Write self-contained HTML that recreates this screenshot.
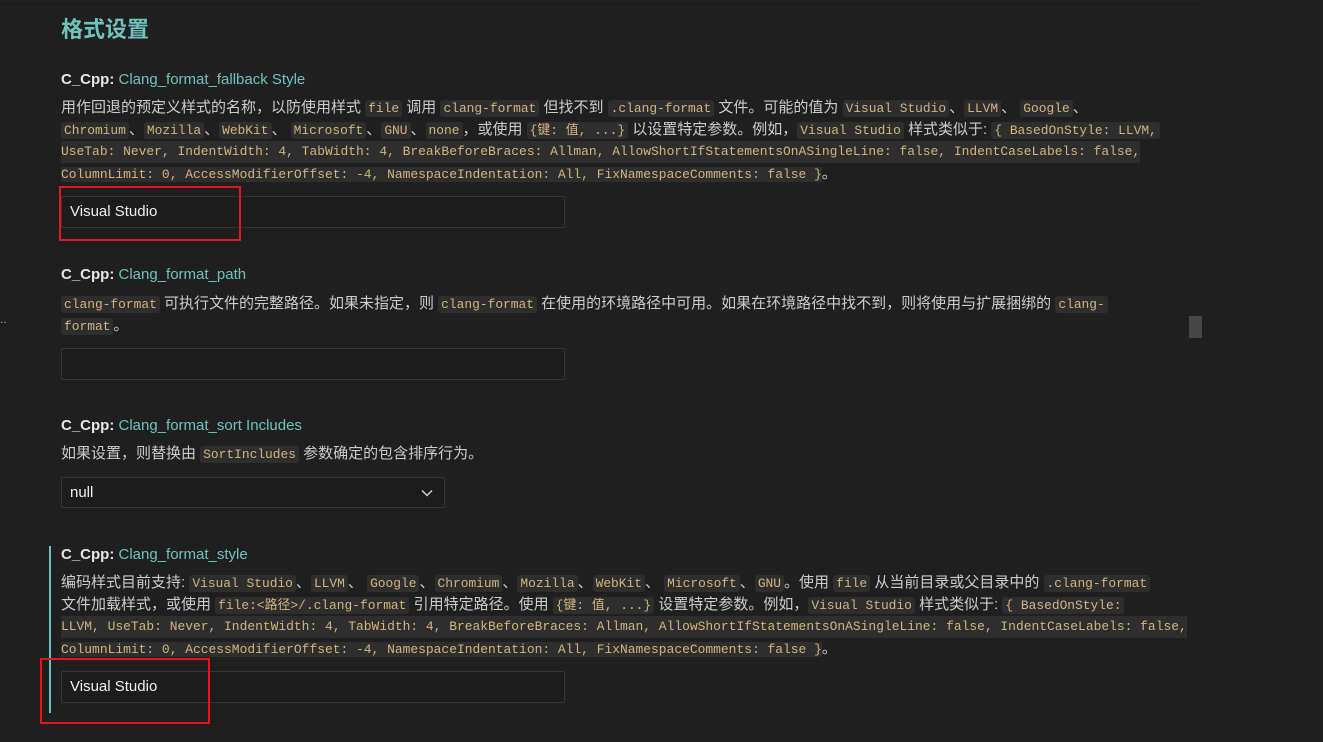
<!DOCTYPE html>
<html><head><meta charset="utf-8"><style>
html,body{margin:0;padding:0;width:1323px;height:742px;overflow:hidden;background:#1f1f1f;}
body{position:relative;font-family:"Liberation Sans","Noto Sans CJK SC",sans-serif;color:#cccccc;font-size:15px;}
.l{position:absolute;left:61px;white-space:nowrap;line-height:22px;height:22px;}
.h{font-weight:bold;color:#e7e7e7;}
.h span{font-weight:normal;color:#6fc3bd;}
code{font-family:"Liberation Mono","Noto Sans CJK SC",monospace;font-size:12.9px;color:#d2b57f;background:#2e2e2e;border-radius:3px;padding:1px 3px;}
.full{background:#2e2e2e;font-family:"Liberation Mono","Noto Sans CJK SC",monospace;font-size:12.95px;color:#d2b57f;}
.box{position:absolute;left:61px;width:502px;height:30px;border:1px solid #363636;background:#1c1c1c;border-radius:2px;}
.box div{position:absolute;left:8px;top:6px;color:#f0f0f0;font-size:15px;}
.red{position:absolute;border:2px solid #e3181c;}
</style></head><body>
<div style="position:absolute;left:0;top:4px;width:1202px;height:1px;background:#1a1a1a"></div>
<div style="position:absolute;left:61px;top:12px;font-size:22px;font-weight:bold;color:#6fc3bd;font-family:'Noto Sans CJK SC',sans-serif">格式设置</div>

<div class="l h" style="top:69px">C_Cpp: <span>Clang_format_fallback Style</span></div>
<div class="l" style="top:97px">用作回退的预定义样式的名称，以防使用样式 <code>file</code> 调用 <code>clang-format</code> 但找不到 <code>.clang-format</code> 文件。可能的值为 <code>Visual Studio</code>、<code>LLVM</code>、 <code>Google</code>、</div>
<div class="l" style="top:119px"><code>Chromium</code>、<code>Mozilla</code>、<code>WebKit</code>、 <code>Microsoft</code>、<code>GNU</code>、<code>none</code>，或使用 <code>{键: 值, ...}</code> 以设置特定参数。例如，<code>Visual Studio</code> 样式类似于: <code>{ BasedOnStyle: LLVM,</code></div>
<div class="l full" style="top:141px">UseTab: Never, IndentWidth: 4, TabWidth: 4, BreakBeforeBraces: Allman, AllowShortIfStatementsOnASingleLine: false, IndentCaseLabels: false,</div>
<div class="l" style="top:163px"><span class="full">ColumnLimit: 0, AccessModifierOffset: -4, NamespaceIndentation: All, FixNamespaceComments: false }</span>。</div>
<div class="box" style="top:196px"><div>Visual Studio</div></div>
<div class="red" style="left:59px;top:186px;width:178px;height:51px"></div>

<div class="l h" style="top:264px">C_Cpp: <span>Clang_format_path</span></div>
<div class="l" style="top:293px"><code>clang-format</code> 可执行文件的完整路径。如果未指定，则 <code>clang-format</code> 在使用的环境路径中可用。如果在环境路径中找不到，则将使用与扩展捆绑的 <code>clang-</code></div>
<div class="l" style="top:315px"><code>format</code>。</div>
<div class="box" style="top:348px"></div>
<div style="position:absolute;left:0;top:312px;font-size:12px;color:#aaa">..</div>
<div style="position:absolute;left:1189px;top:316px;width:13px;height:22px;background:#474747"></div>

<div class="l h" style="top:415px">C_Cpp: <span>Clang_format_sort Includes</span></div>
<div class="l" style="top:443px">如果设置，则替换由 <code>SortIncludes</code> 参数确定的包含排序行为。</div>
<div class="box" style="top:477px;width:382px;height:29px"><div style="top:6px">null</div>
<svg style="position:absolute;left:358px;top:8px" width="14" height="14" viewBox="0 0 14 14"><path d="M2 4.5 L7 9.5 L12 4.5" fill="none" stroke="#d0d0d0" stroke-width="1.5"/></svg></div>

<div style="position:absolute;left:49px;top:546px;width:2px;height:167px;background:#6fc3bd"></div>
<div class="l h" style="top:544px">C_Cpp: <span>Clang_format_style</span></div>
<div class="l" style="top:572px">编码样式目前支持: <code>Visual Studio</code>、<code>LLVM</code>、 <code>Google</code>、<code>Chromium</code>、<code>Mozilla</code>、<code>WebKit</code>、 <code>Microsoft</code>、<code>GNU</code>。使用 <code>file</code> 从当前目录或父目录中的 <code>.clang-format</code></div>
<div class="l" style="top:594px">文件加载样式，或使用 <code>file:&lt;路径&gt;/.clang-format</code> 引用特定路径。使用 <code>{键: 值, ...}</code> 设置特定参数。例如，<code>Visual Studio</code> 样式类似于: <code>{ BasedOnStyle:</code></div>
<div class="l full" style="top:616px">LLVM, UseTab: Never, IndentWidth: 4, TabWidth: 4, BreakBeforeBraces: Allman, AllowShortIfStatementsOnASingleLine: false, IndentCaseLabels: false,</div>
<div class="l" style="top:638px"><span class="full">ColumnLimit: 0, AccessModifierOffset: -4, NamespaceIndentation: All, FixNamespaceComments: false }</span>。</div>
<div class="box" style="top:671px"><div>Visual Studio</div></div>
<div class="red" style="left:40px;top:658px;width:166px;height:62px"></div>
</body></html>
